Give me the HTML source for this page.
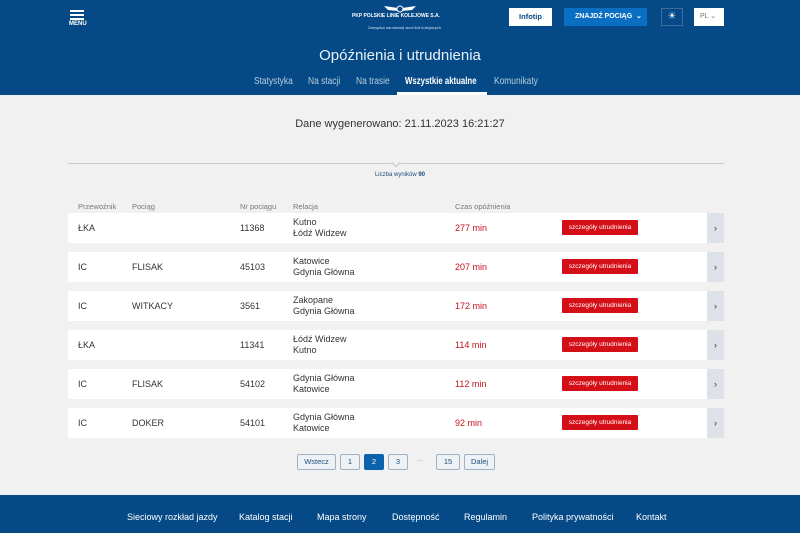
<!DOCTYPE html>
<html><head><meta charset="utf-8"><style>
*{margin:0;padding:0;box-sizing:border-box}
body{width:800px;height:533px;overflow:hidden;background:#f1f1f1;font-family:"Liberation Sans",sans-serif;position:relative;color:#333}
.hdr{position:absolute;left:0;top:0;width:800px;height:95px;background:#054a86;color:#fff}
.abs{position:absolute}
.tab{position:absolute;top:76px;font-size:10px;color:#b9cde0;transform:scaleX(.84);transform-origin:left}
.row{position:absolute;left:68px;width:656px;height:30px;background:#fff;font-size:9px;color:#333}
.row span{position:absolute}
.row .r1{top:4px}.row .r2{top:15px}
.row .m{top:10px}
.btn{position:absolute;left:494px;top:7px;width:76px;height:15px;background:#d50f17;color:#fff;font-size:6.5px;text-align:center;line-height:15px;border-radius:1px}
.arr{position:absolute;right:0;top:0;width:17px;height:30px;background:#dde2e8;color:#333;font-size:9px;text-align:center;line-height:30px}
.del{color:#c0121b}
.pg{position:absolute;top:454px;height:16px;border:1px solid #9fb2c4;background:#eef2f6;font-size:7.5px;text-align:center;line-height:14px;color:#1b4d7c;border-radius:2px}
.ft{position:absolute;left:0;top:495px;width:800px;height:38px;background:#054a86;color:#fff;font-size:9px}
.ft span{position:absolute;top:17px}
</style></head><body>
<div class="hdr">
 <div class="abs" style="left:70px;top:10px;width:14px;height:2px;background:#fff;box-shadow:0 4px 0 #fff,0 8px 0 #fff"></div>
 <div class="abs" style="left:69px;top:21px;font-size:6px;font-weight:bold">MENU</div>
 <svg class="abs" style="left:382px;top:4px" width="36" height="11" viewBox="0 0 36 11"><path d="M2 2 L16 4 L20 4 L34 2 L30 6 L20 7 L16 7 L6 6Z" fill="#fff"/><circle cx="18" cy="5" r="3" fill="#054a86" stroke="#fff"/></svg>
 <div class="abs" style="left:352px;top:13px;font-size:5.5px;font-weight:bold;transform:scaleX(.9);transform-origin:left">PKP POLSKIE LINIE KOLEJOWE S.A.</div>
 <div class="abs" style="left:368px;top:25px;font-size:4px;color:#cfe0f0">Zarządca narodowej sieci linii kolejowych</div>
 <div class="abs" style="left:509px;top:8px;width:43px;height:18px;background:#fff;color:#054a86;font-size:7.5px;font-weight:bold;text-align:center;line-height:18px">Infotip</div>
 <div class="abs" style="left:564px;top:8px;width:83px;height:18px;background:#0a6fc2;color:#fff;font-size:7px;font-weight:bold;line-height:18px;padding-left:11px">ZNAJDŹ POCIĄG &nbsp;⌄</div>
 <div class="abs" style="left:661px;top:8px;width:22px;height:18px;border:1px solid #3a6fa0;text-align:center;line-height:16px;font-size:10px">☀</div>
 <div class="abs" style="left:694px;top:8px;width:30px;height:18px;background:#fff;color:#777;font-size:7px;line-height:18px;padding-left:6px">PL ⌄</div>
 <div class="abs" style="left:0;width:800px;top:47px;text-align:center;font-size:15px;color:#e9f1f8">Opóźnienia i utrudnienia</div>
 <div class="tab" style="left:254px">Statystyka</div>
 <div class="tab" style="left:308px">Na stacji</div>
 <div class="tab" style="left:356px">Na trasie</div>
 <div class="tab" style="left:405px;color:#fff;font-weight:bold;transform:scaleX(.78)">Wszystkie aktualne</div>
 <div class="tab" style="left:494px">Komunikaty</div>
 <div class="abs" style="top:92px;left:397px;width:90px;height:3px;background:#fff"></div>
</div>
<div class="abs" style="left:0;width:800px;top:118px;text-align:center;font-size:11px;color:#333">Dane wygenerowano: 21.11.2023 16:21:27</div>
<div class="abs" style="left:68px;width:656px;top:163px;height:1px;background:#c9c9c9"></div>
<div class="abs" style="left:393px;top:160px;width:6px;height:6px;background:#f1f1f1;border-right:1px solid #c9c9c9;border-bottom:1px solid #c9c9c9;transform:rotate(45deg)"></div>
<div class="abs" style="left:0;width:800px;top:172px;text-align:center;font-size:6px;color:#1b4d7c">Liczba wyników <b>90</b></div>
<div class="abs" style="top:202px;left:78px;font-size:7.5px;color:#777">Przewoźnik</div>
<div class="abs" style="top:202px;left:132px;font-size:7.5px;color:#777">Pociąg</div>
<div class="abs" style="top:202px;left:240px;font-size:7.5px;color:#777">Nr pociągu</div>
<div class="abs" style="top:202px;left:293px;font-size:7.5px;color:#777">Relacja</div>
<div class="abs" style="top:202px;left:455px;font-size:7.5px;color:#777">Czas opóźnienia</div>

<div class="row" style="top:213px"><span class="m" style="left:10px">ŁKA</span><span class="m" style="left:172px">11368</span><span class="r1" style="left:225px">Kutno</span><span class="r2" style="left:225px">Łódź Widzew</span><span class="m del" style="left:387px">277 min</span><div class="btn">szczegóły utrudnienia</div><div class="arr">›</div></div>
<div class="row" style="top:252px"><span class="m" style="left:10px">IC</span><span class="m" style="left:64px">FLISAK</span><span class="m" style="left:172px">45103</span><span class="r1" style="left:225px">Katowice</span><span class="r2" style="left:225px">Gdynia Główna</span><span class="m del" style="left:387px">207 min</span><div class="btn">szczegóły utrudnienia</div><div class="arr">›</div></div>
<div class="row" style="top:291px"><span class="m" style="left:10px">IC</span><span class="m" style="left:64px">WITKACY</span><span class="m" style="left:172px">3561</span><span class="r1" style="left:225px">Zakopane</span><span class="r2" style="left:225px">Gdynia Główna</span><span class="m del" style="left:387px">172 min</span><div class="btn">szczegóły utrudnienia</div><div class="arr">›</div></div>
<div class="row" style="top:330px"><span class="m" style="left:10px">ŁKA</span><span class="m" style="left:172px">11341</span><span class="r1" style="left:225px">Łódź Widzew</span><span class="r2" style="left:225px">Kutno</span><span class="m del" style="left:387px">114 min</span><div class="btn">szczegóły utrudnienia</div><div class="arr">›</div></div>
<div class="row" style="top:369px"><span class="m" style="left:10px">IC</span><span class="m" style="left:64px">FLISAK</span><span class="m" style="left:172px">54102</span><span class="r1" style="left:225px">Gdynia Główna</span><span class="r2" style="left:225px">Katowice</span><span class="m del" style="left:387px">112 min</span><div class="btn">szczegóły utrudnienia</div><div class="arr">›</div></div>
<div class="row" style="top:408px"><span class="m" style="left:10px">IC</span><span class="m" style="left:64px">DOKER</span><span class="m" style="left:172px">54101</span><span class="r1" style="left:225px">Gdynia Główna</span><span class="r2" style="left:225px">Katowice</span><span class="m del" style="left:387px">92 min</span><div class="btn">szczegóły utrudnienia</div><div class="arr">›</div></div>

<div class="pg" style="left:297px;width:39px">Wstecz</div>
<div class="pg" style="left:340px;width:20px">1</div>
<div class="pg" style="left:364px;width:20px;background:#0a62ad;color:#fff;border-color:#0a62ad">2</div>
<div class="pg" style="left:388px;width:20px">3</div>
<div class="abs" style="left:417px;top:456px;font-size:7px;color:#888">...</div>
<div class="pg" style="left:436px;width:24px">15</div>
<div class="pg" style="left:464px;width:31px">Dalej</div>

<div class="ft"><span style="left:127px">Sieciowy rozkład jazdy</span><span style="left:239px">Katalog stacji</span><span style="left:317px">Mapa strony</span><span style="left:392px">Dostępność</span><span style="left:464px">Regulamin</span><span style="left:532px">Polityka prywatności</span><span style="left:636px">Kontakt</span></div>
</body></html>
